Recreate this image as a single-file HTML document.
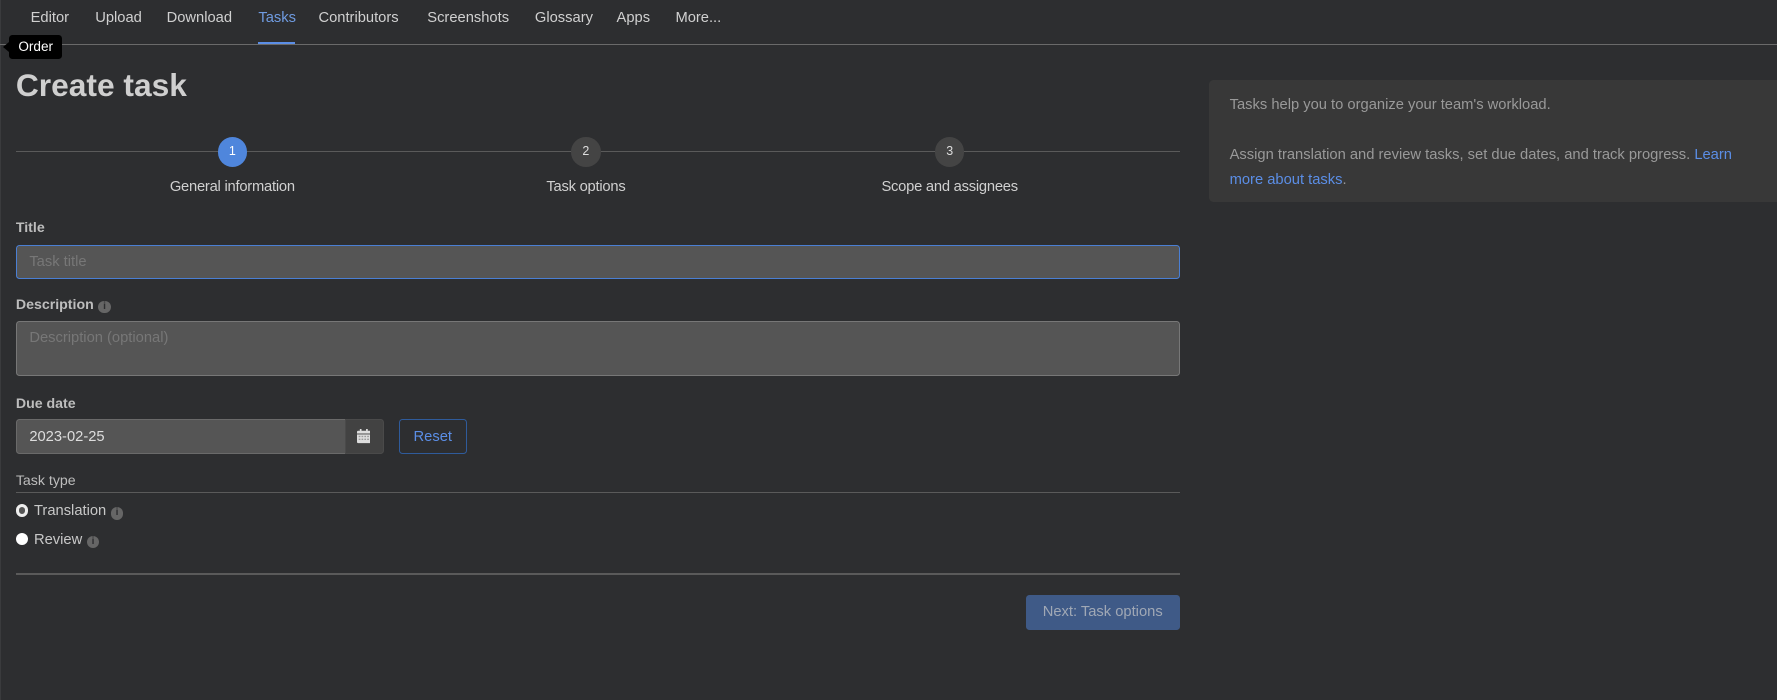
<!DOCTYPE html>
<html><head><meta charset="utf-8"><style>
html,body{margin:0;padding:0;background:#2d2e30;width:1777px;height:700px;overflow:hidden}
#w{zoom:1.13329;position:relative;width:1568px;height:618px;font-family:"Liberation Sans",sans-serif;font-size:13px;color:#c8c8c8}
.a{position:absolute}
.nav span{position:absolute;top:9px;color:#d0d0d0;font-size:13px}
.lbl{position:absolute;left:14px;color:#bdbdbd;font-weight:bold;font-size:12.5px}
.inp{position:absolute;background:#555;box-sizing:border-box;border-radius:3px}
.circ{position:absolute;width:26px;height:26px;border-radius:50%;background:#444;color:#ddd;text-align:center;line-height:26px;font-size:11px;top:121px}
.step{position:absolute;top:158px;font-size:13px;color:#d0d0d0;transform:translateX(-50%);white-space:nowrap;letter-spacing:-0.2px}
.info{display:inline-block;width:11px;height:11px;border-radius:50%;background:#666;color:#2d2e30;font-size:9px;line-height:11px;text-align:center;font-weight:bold;vertical-align:-1px;margin-left:4px}
.radio{position:absolute;left:14px;width:11px;height:11px;border-radius:50%;background:#fff;box-sizing:border-box}
</style></head><body><div id="w">
<div class="a" style="left:0;top:0;width:1px;height:618px;background:#3a3b3d"></div>
<div class="nav">
<span style="left:27px">Editor</span><span style="left:84px">Upload</span><span style="left:147px">Download</span><span style="left:228px;color:#6f9be0">Tasks</span><span style="left:281px">Contributors</span><span style="left:377px">Screenshots</span><span style="left:472px">Glossary</span><span style="left:544px">Apps</span><span style="left:596px">More...</span>
</div>
<div class="a" style="left:0;top:39px;width:1568px;height:1px;background:#6a6a6a"></div>
<div class="a" style="left:228px;top:37px;width:32px;height:2px;background:#5b8ee6"></div>
<div class="a" style="left:8px;top:31px;width:47px;height:21px;background:#000;border-radius:3px;color:#fff;font-size:12px;line-height:22px;text-align:center">Order</div>
<div class="a" style="left:3px;top:37px;width:0;height:0;border-top:5px solid transparent;border-bottom:5px solid transparent;border-right:6px solid #000"></div>
<div class="a" style="left:14px;top:59px;font-size:28px;font-weight:bold;color:#cfcfcf">Create task</div>
<div class="a" style="left:14px;top:133px;width:1027px;height:1px;background:#5a5a5a"></div>
<div class="circ" style="left:192px;background:#4f86dc;color:#fff">1</div>
<div class="circ" style="left:504px">2</div>
<div class="circ" style="left:825px">3</div>
<div class="step" style="left:205px">General information</div>
<div class="step" style="left:517px">Task options</div>
<div class="step" style="left:838px">Scope and assignees</div>
<div class="lbl" style="top:194px">Title</div>
<div class="inp" style="left:14px;top:216px;width:1027px;height:30px;border:1px solid #4a7fd4;color:#777;padding:7px 11px">Task title</div>
<div class="lbl" style="top:262px">Description<span class="info" style="vertical-align:0">i</span></div>
<div class="inp" style="left:14px;top:283px;width:1027px;height:49px;border:1px solid #777;color:#777;padding:7px 11px">Description (optional)</div>
<div class="lbl" style="top:349px">Due date</div>
<div class="inp" style="left:14px;top:370px;width:291px;height:31px;border:1px solid #6a6a6a;border-radius:3px 0 0 3px;color:#ddd;padding:8px 11px">2023-02-25</div>
<div class="inp" style="left:304px;top:370px;width:35px;height:31px;border:1px solid #4a4a4a;background:#424242;border-radius:0 3px 3px 0">
<svg width="12" height="13" style="position:absolute;left:10px;top:8px" viewBox="0 0 12 13"><rect x="0" y="1.5" width="12" height="11" rx="1" fill="#ddd"/><rect x="2.5" y="0" width="1.5" height="3" fill="#ddd"/><rect x="8" y="0" width="1.5" height="3" fill="#ddd"/><rect x="0" y="4" width="12" height="0.8" fill="#424242"/><g fill="#999"><rect x="1.5" y="6" width="1.5" height="1.2"/><rect x="4" y="6" width="1.5" height="1.2"/><rect x="6.5" y="6" width="1.5" height="1.2"/><rect x="9" y="6" width="1.5" height="1.2"/><rect x="1.5" y="8.5" width="1.5" height="1.2"/><rect x="4" y="8.5" width="1.5" height="1.2"/><rect x="6.5" y="8.5" width="1.5" height="1.2"/><rect x="9" y="8.5" width="1.5" height="1.2"/></g></svg></div>
<div class="a" style="left:352px;top:370px;width:58px;height:29px;border:1px solid #2f5b9b;border-radius:3px;color:#5b8ee6;text-align:center;line-height:30px">Reset</div>
<div class="a" style="left:14px;top:417px;color:#bdbdbd;font-size:12.5px">Task type</div>
<div class="a" style="left:14px;top:434px;width:1027px;height:1px;background:#5a5a5a"></div>
<div class="radio" style="top:445px;border:3px solid #eee;background:#555"></div>
<div class="a" style="left:30px;top:444px;color:#c8c8c8">Translation<span class="info" style="vertical-align:0">i</span></div>
<div class="radio" style="top:470px"></div>
<div class="a" style="left:30px;top:469px;color:#c8c8c8">Review<span class="info" style="vertical-align:0">i</span></div>
<div class="a" style="left:14px;top:506px;width:1027px;height:1px;background:#5a5a5a"></div>
<div class="a" style="left:905px;top:525px;width:136px;height:31px;background:#3f5a87;border-radius:3px;color:#a0a8b5;text-align:center;line-height:31px">Next: Task options</div>
<div class="a" style="left:1067px;top:71px;width:501px;height:107px;background:#383838;border-radius:4px 0 0 4px"></div>
<div class="a" style="left:1085px;top:82px;width:470px;color:#999;line-height:22px">Tasks help you to organize your team's workload.<br><br>Assign translation and review tasks, set due dates, and track progress. <span style="color:#5b8ee6">Learn more about tasks</span>.</div>
</div></body></html>
